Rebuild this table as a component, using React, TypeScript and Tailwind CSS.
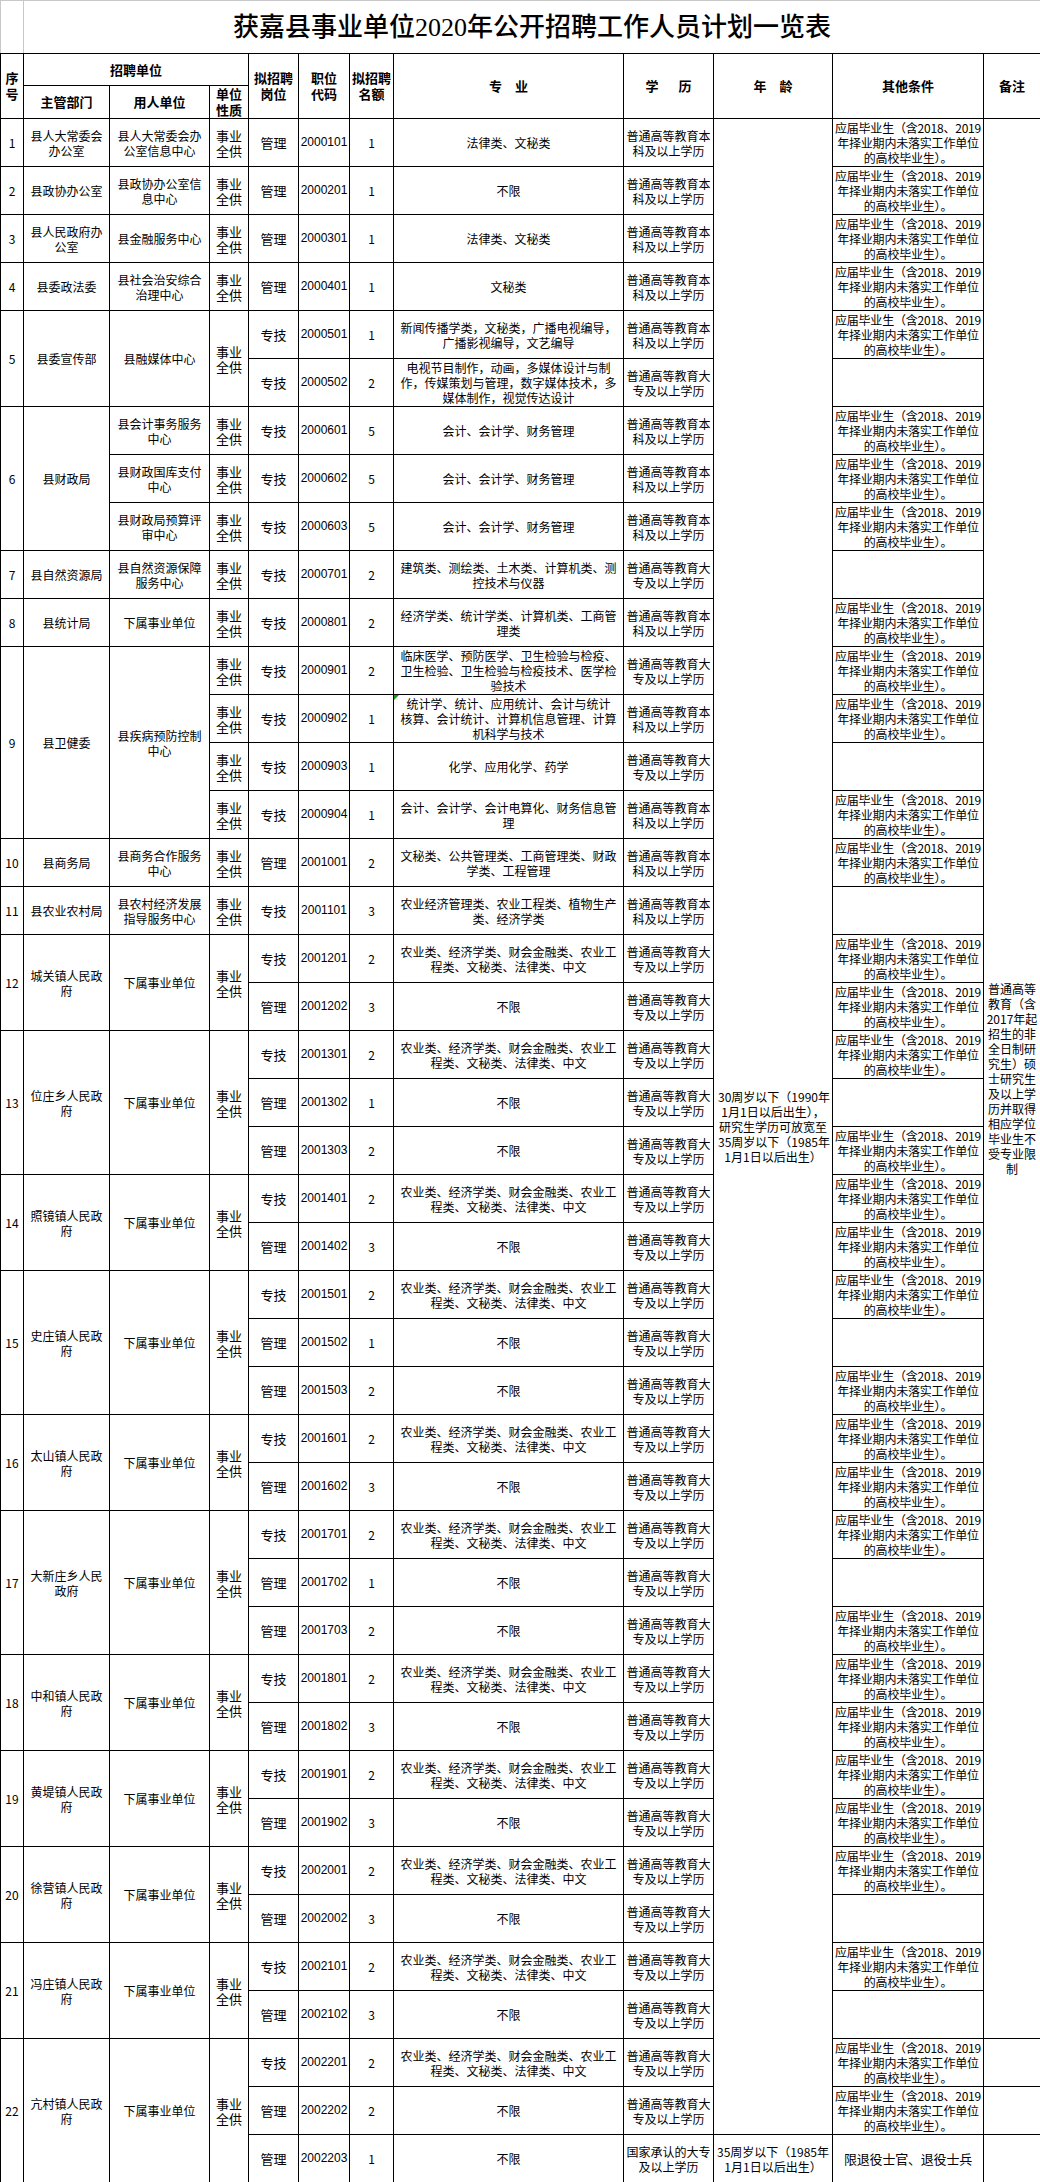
import React from "react";

type Post = {
	kind: "管理" | "专技";
	code: string;
	count: number;
	major: string[];
	edu: "ben" | "zhuan" | "guojia";
	other?: "none" | "veteran";
	marker?: boolean;
};

type Unit = { name: string; posts: Post[]; splitNature?: boolean };
type Group = { no: number; dept: string; units: Unit[] };

const EDU: Record<Post["edu"], string[]> = {
	ben: ["普通高等教育本", "科及以上学历"],
	zhuan: ["普通高等教育大", "专及以上学历"],
	guojia: ["国家承认的大专", "及以上学历"],
};

const FRESH = ["应届毕业生（含2018、2019", "年择业期内未落实工作单位", "的高校毕业生）。"];
const TOWN_MAJOR = ["农业类、经济学类、财会金融类、农业工", "程类、文秘类、法律类、中文"];
const ACCT = ["会计、会计学、财务管理"];
const AGE = ["30周岁以下（1990年", "1月1日以后出生），", "研究生学历可放宽至", "35周岁以下（1985年", "1月1日以后出生）"];
const NOTE = ["普通高等", "教育（含", "2017年起", "招生的非", "全日制研", "究生）硕", "士研究生", "及以上学", "历并取得", "相应学位", "毕业生不", "受专业限", "制"];

const tech = (code: string, count: number, other?: Post["other"]): Post => ({ kind: "专技", code, count, major: TOWN_MAJOR, edu: "zhuan", other });
const mgmt = (code: string, count: number, other?: Post["other"]): Post => ({ kind: "管理", code, count, major: ["不限"], edu: "zhuan", other });
const town = (no: number, dept: string, posts: Post[]): Group => ({ no, dept, units: [{ name: "下属事业单位", posts }] });

const GROUPS: Group[] = [
	{ no: 1, dept: "县人大常委会办公室", units: [{ name: "县人大常委会办公室信息中心", posts: [{ kind: "管理", code: "2000101", count: 1, major: ["法律类、文秘类"], edu: "ben" }] }] },
	{ no: 2, dept: "县政协办公室", units: [{ name: "县政协办公室信息中心", posts: [{ kind: "管理", code: "2000201", count: 1, major: ["不限"], edu: "ben" }] }] },
	{ no: 3, dept: "县人民政府办公室", units: [{ name: "县金融服务中心", posts: [{ kind: "管理", code: "2000301", count: 1, major: ["法律类、文秘类"], edu: "ben" }] }] },
	{ no: 4, dept: "县委政法委", units: [{ name: "县社会治安综合治理中心", posts: [{ kind: "管理", code: "2000401", count: 1, major: ["文秘类"], edu: "ben" }] }] },
	{
		no: 5,
		dept: "县委宣传部",
		units: [
			{
				name: "县融媒体中心",
				posts: [
					{ kind: "专技", code: "2000501", count: 1, major: ["新闻传播学类，文秘类，广播电视编导，", "广播影视编导，文艺编导"], edu: "ben" },
					{ kind: "专技", code: "2000502", count: 2, major: ["电视节目制作，动画，多媒体设计与制", "作，传媒策划与管理，数字媒体技术，多", "媒体制作，视觉传达设计"], edu: "zhuan", other: "none" },
				],
			},
		],
	},
	{
		no: 6,
		dept: "县财政局",
		units: [
			{ name: "县会计事务服务中心", posts: [{ kind: "专技", code: "2000601", count: 5, major: ACCT, edu: "ben" }] },
			{ name: "县财政国库支付中心", posts: [{ kind: "专技", code: "2000602", count: 5, major: ACCT, edu: "ben" }] },
			{ name: "县财政局预算评审中心", posts: [{ kind: "专技", code: "2000603", count: 5, major: ACCT, edu: "ben" }] },
		],
	},
	{ no: 7, dept: "县自然资源局", units: [{ name: "县自然资源保障服务中心", posts: [{ kind: "专技", code: "2000701", count: 2, major: ["建筑类、测绘类、土木类、计算机类、测", "控技术与仪器"], edu: "zhuan", other: "none" }] }] },
	{ no: 8, dept: "县统计局", units: [{ name: "下属事业单位", posts: [{ kind: "专技", code: "2000801", count: 2, major: ["经济学类、统计学类、计算机类、工商管", "理类"], edu: "ben" }] }] },
	{
		no: 9,
		dept: "县卫健委",
		units: [
			{
				name: "县疾病预防控制中心",
				splitNature: true,
				posts: [
					{ kind: "专技", code: "2000901", count: 2, major: ["临床医学、预防医学、卫生检验与检疫、", "卫生检验、卫生检验与检疫技术、医学检", "验技术"], edu: "zhuan" },
					{ kind: "专技", code: "2000902", count: 1, major: ["统计学、统计、应用统计、会计与统计", "核算、会计统计、计算机信息管理、计算", "机科学与技术"], edu: "ben", marker: true },
					{ kind: "专技", code: "2000903", count: 1, major: ["化学、应用化学、药学"], edu: "zhuan", other: "none" },
					{ kind: "专技", code: "2000904", count: 1, major: ["会计、会计学、会计电算化、财务信息管", "理"], edu: "ben" },
				],
			},
		],
	},
	{ no: 10, dept: "县商务局", units: [{ name: "县商务合作服务中心", posts: [{ kind: "管理", code: "2001001", count: 2, major: ["文秘类、公共管理类、工商管理类、财政", "学类、工程管理"], edu: "ben" }] }] },
	{ no: 11, dept: "县农业农村局", units: [{ name: "县农村经济发展指导服务中心", posts: [{ kind: "专技", code: "2001101", count: 3, major: ["农业经济管理类、农业工程类、植物生产", "类、经济学类"], edu: "ben", other: "none" }] }] },
	town(12, "城关镇人民政府", [tech("2001201", 2), mgmt("2001202", 3)]),
	town(13, "位庄乡人民政府", [tech("2001301", 2), mgmt("2001302", 1, "none"), mgmt("2001303", 2)]),
	town(14, "照镜镇人民政府", [tech("2001401", 2), mgmt("2001402", 3)]),
	town(15, "史庄镇人民政府", [tech("2001501", 2), mgmt("2001502", 1, "none"), mgmt("2001503", 2)]),
	town(16, "太山镇人民政府", [tech("2001601", 2), mgmt("2001602", 3)]),
	town(17, "大新庄乡人民政府", [tech("2001701", 2), mgmt("2001702", 1, "none"), mgmt("2001703", 2)]),
	town(18, "中和镇人民政府", [tech("2001801", 2), mgmt("2001802", 3)]),
	town(19, "黄堤镇人民政府", [tech("2001901", 2), mgmt("2001902", 3)]),
	town(20, "徐营镇人民政府", [tech("2002001", 2), mgmt("2002002", 3, "none")]),
	town(21, "冯庄镇人民政府", [tech("2002101", 2), mgmt("2002102", 3, "none")]),
	town(22, "亢村镇人民政府", [
		tech("2002201", 2),
		mgmt("2002202", 2),
		{ kind: "管理", code: "2002203", count: 1, major: ["不限"], edu: "guojia", other: "veteran" },
	]),
];

const td = "border border-black text-center align-middle text-[12px] leading-[15px] text-black";
const th = "border border-black text-center align-middle text-[13px] leading-[16px] font-bold text-black";

function Lines({ lines }: { lines: string[] }) {
	return (
		<span className="whitespace-nowrap">
			{lines.map((l, i) => (
				<React.Fragment key={i}>
					{i > 0 && <br />}
					{l}
				</React.Fragment>
			))}
		</span>
	);
}

function Body() {
	const rows: React.ReactNode[] = [];
	let idx = 0;
	GROUPS.forEach((g) => {
		const total = g.units.reduce((s, u) => s + u.posts.length, 0);
		g.units.forEach((u, ui) => {
			u.posts.forEach((p, pi) => {
				const first = ui === 0 && pi === 0;
				const i = idx++;
				rows.push(
					<tr key={p.code} className="h-[48px]">
						{first && (
							<td rowSpan={total} className={td}>
								{g.no}
							</td>
						)}
						{first && (
							<td rowSpan={total} className={`${td} px-1`}>
								{g.dept}
							</td>
						)}
						{pi === 0 && (
							<td rowSpan={u.posts.length} className={`${td} px-1`}>
								{u.name}
							</td>
						)}
						{(u.splitNature || pi === 0) && (
							<td rowSpan={u.splitNature ? 1 : u.posts.length} className={`${td} px-1 text-[13px]`}>
								事业全供
							</td>
						)}
						<td className={`${td} text-[13px]`}>{p.kind}</td>
						<td className={`${td} font-['Liberation_Sans',sans-serif] text-[11px]`}>{p.code}</td>
						<td className={td}>{p.count}</td>
						<td className={`${td} relative`}>
							{p.marker && <span className="absolute left-0 top-0 h-0 w-0 border-r-[5px] border-t-[5px] border-r-transparent border-t-[#1a9a1a]" />}
							<Lines lines={p.major} />
						</td>
						<td className={td}>
							<Lines lines={EDU[p.edu]} />
						</td>
						{i === 0 && (
							<td rowSpan={42} className={`${td} px-1`}>
								<Lines lines={AGE} />
							</td>
						)}
						{i === 42 && (
							<td className={td}>
								<Lines lines={["35周岁以下（1985年", "1月1日以后出生）"]} />
							</td>
						)}
						<td className={`${td} tracking-[-0.2px]`}>
							{p.other === "veteran" ? (
								<span className="text-[13px]">限退役士官、退役士兵</span>
							) : p.other === "none" ? null : (
								<Lines lines={FRESH} />
							)}
						</td>
						{i === 0 && (
							<td rowSpan={40} className={td}>
								<Lines lines={NOTE} />
							</td>
						)}
						{i >= 40 && <td className={td} />}
					</tr>
				);
			});
		});
	});
	return <tbody>{rows}</tbody>;
}

export default function App() {
	return (
		<div className="w-[1040px] bg-white font-['Noto_Sans_CJK_SC','Noto_Sans',sans-serif]">
			<table className="w-[1040px] table-fixed border-collapse">
				<colgroup>
					<col className="w-[23px]" />
					<col className="w-[86px]" />
					<col className="w-[100px]" />
					<col className="w-[39px]" />
					<col className="w-[50px]" />
					<col className="w-[51px]" />
					<col className="w-[44px]" />
					<col className="w-[230px]" />
					<col className="w-[90px]" />
					<col className="w-[119px]" />
					<col className="w-[151px]" />
					<col className="w-[57px]" />
				</colgroup>
				<thead>
					<tr className="h-[53px]">
						<td className="border border-[#c8c8c8] border-b-black" />
						<td colSpan={11} className="border border-[#c8c8c8] border-b-black text-center align-middle font-['Liberation_Serif','Noto_Sans_CJK_SC',serif] text-[26px] font-medium text-black">
							获嘉县事业单位2020年公开招聘工作人员计划一览表
						</td>
					</tr>
					<tr className="h-[32px]">
						<th rowSpan={2} className={th}>
							序<br />号
						</th>
						<th colSpan={3} className={th}>
							招聘单位
						</th>
						<th rowSpan={2} className={th}>
							拟招聘<br />岗位
						</th>
						<th rowSpan={2} className={th}>
							职位<br />代码
						</th>
						<th rowSpan={2} className={th}>
							拟招聘<br />名额
						</th>
						<th rowSpan={2} className={th}>
							专　业
						</th>
						<th rowSpan={2} className={th}>
							<span className="inline-flex gap-[20px]">
								<span>学</span>
								<span>历</span>
							</span>
						</th>
						<th rowSpan={2} className={th}>
							年　龄
						</th>
						<th rowSpan={2} className={th}>
							其他条件
						</th>
						<th rowSpan={2} className={th}>
							备注
						</th>
					</tr>
					<tr className="h-[32px]">
						<th className={th}>主管部门</th>
						<th className={th}>用人单位</th>
						<th className={th}>
							单位<br />性质
						</th>
					</tr>
				</thead>
				<Body />
			</table>
		</div>
	);
}
